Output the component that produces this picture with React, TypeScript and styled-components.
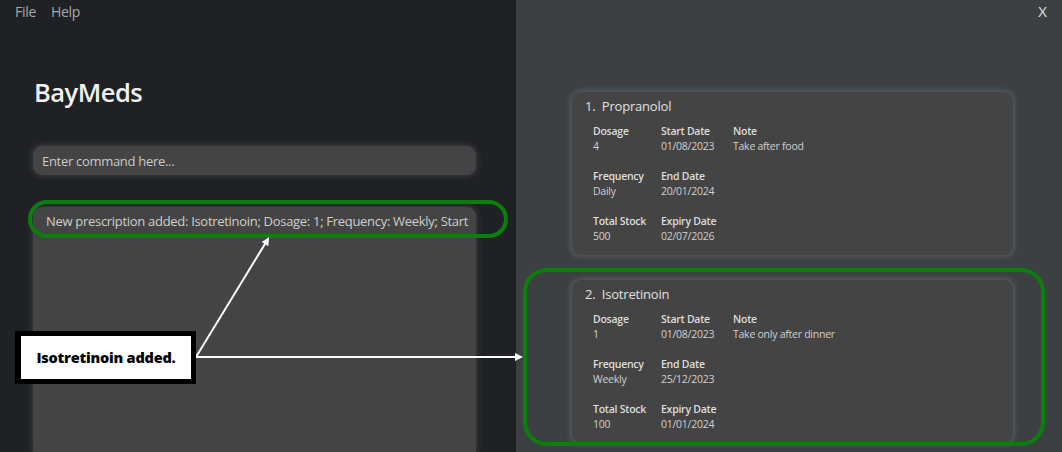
import React from "react";
import styled, { createGlobalStyle } from "styled-components";

const Global = createGlobalStyle`
  html, body { margin: 0; padding: 0; background: #202125; }
  body { font-family: "Open Sans", "Noto Sans", sans-serif; }
  * { box-sizing: border-box; }
`;

const Screen = styled.div`
  position: relative;
  display: flex;
  width: 1062px;
  height: 452px;
  overflow: hidden;
`;

const LeftPane = styled.div`
  width: 516px;
  flex: none;
  background: #202125;
  display: flex;
  flex-direction: column;
`;

const MenuBar = styled.div`
  height: 22px;
  display: flex;
  align-items: center;
  gap: 15px;
  padding-left: 15px;
  font-size: 14px;
  color: #a9a9a9;
  letter-spacing: -0.3px;
`;

const Main = styled.div`
  flex: 1;
  display: flex;
  flex-direction: column;
  padding: 0 40px 0 33px;
`;

const Title = styled.h1`
  margin: 54px 0 0 1px;
  font-size: 25.5px;
  font-weight: 600;
  color: #f2f2f2;
  line-height: 32px;
  letter-spacing: -0.5px;
`;

const CommandBox = styled.div`
  margin-top: 38px;
  height: 29px;
  border-radius: 9px;
  background: #444444;
  box-shadow: 0 0 6px 1px rgba(150, 165, 175, 0.22);
  display: flex;
  align-items: center;
  padding-left: 9px;
  font-size: 13px;
  color: #c9c9c9;
  letter-spacing: -0.3px;
`;

const ResultBox = styled.div`
  margin-top: 32px;
  flex: 1;
  background: #444444;
  border-radius: 9px 9px 0 0;
  box-shadow: 0 0 6px 1px rgba(150, 165, 175, 0.22);
  padding: 5px 0 0 13px;
  font-size: 13px;
  color: #cfcfcf;
  letter-spacing: -0.3px;
  white-space: nowrap;
  overflow: hidden;
`;

const RightPane = styled.div`
  flex: 1;
  background: #3d4043;
  position: relative;
  display: flex;
  flex-direction: column;
  padding: 92px 49px 0 56px;
  gap: 25px;
`;

const CloseX = styled.div`
  position: absolute;
  top: 1px;
  right: 15px;
  font-size: 15px;
  color: #e4e4e4;
`;

const Card = styled.div`
  height: 163px;
  background: #444444;
  border-radius: 9px;
  box-shadow: 0 0 5px 2px rgba(120, 140, 150, 0.35);
  padding: 4px 13px 0 13px;
  color: #dcdcdc;
`;

const CardTitle = styled.div`
  font-size: 13px;
  line-height: 20px;
  color: #e0e0e0;
  letter-spacing: -0.2px;
  white-space: pre;
`;

const FieldGrid = styled.div`
  margin: 8px 0 0 8px;
  display: grid;
  grid-template-columns: 68px 72px 1fr;
  row-gap: 15px;
`;

const Field = styled.div`
  display: flex;
  flex-direction: column;
  font-size: 10.5px;
  line-height: 15px;
  letter-spacing: -0.25px;
`;

const Label = styled.span`
  font-weight: 600;
  color: #dddddd;
`;

const Value = styled.span`
  color: #d0d0d0;
`;

const GreenRing = styled.div<{ $radius: number }>`
  position: absolute;
  border: 4.5px solid #0b7f0b;
  border-radius: ${(p) => p.$radius}px;
  pointer-events: none;
`;

const Callout = styled.div`
  position: absolute;
  left: 15px;
  top: 331px;
  width: 181px;
  height: 53px;
  background: #ffffff;
  border: 5px solid #000000;
  border-left-width: 6px;
  display: flex;
  align-items: center;
  justify-content: center;
  font-size: 14.5px;
  font-weight: 800;
  color: #000;
  letter-spacing: -0.2px;
`;

const Overlay = styled.svg`
  position: absolute;
  left: 0;
  top: 0;
  pointer-events: none;
`;

type Rx = {
  num: number;
  name: string;
  dosage: string;
  start: string;
  note: string;
  freq: string;
  end: string;
  stock: string;
  expiry: string;
};

const data: Rx[] = [
  {
    num: 1,
    name: "Propranolol",
    dosage: "4",
    start: "01/08/2023",
    note: "Take after food",
    freq: "Daily",
    end: "20/01/2024",
    stock: "500",
    expiry: "02/07/2026",
  },
  {
    num: 2,
    name: "Isotretinoin",
    dosage: "1",
    start: "01/08/2023",
    note: "Take only after dinner",
    freq: "Weekly",
    end: "25/12/2023",
    stock: "100",
    expiry: "01/01/2024",
  },
];

const F = ({ label, value }: { label: string; value: string }) => (
  <Field>
    <Label>{label}</Label>
    <Value>{value}</Value>
  </Field>
);

const RxCard = ({ rx }: { rx: Rx }) => (
  <Card>
    <CardTitle>{`${rx.num}.  ${rx.name}`}</CardTitle>
    <FieldGrid>
      <F label="Dosage" value={rx.dosage} />
      <F label="Start Date" value={rx.start} />
      <F label="Note" value={rx.note} />
      <F label="Frequency" value={rx.freq} />
      <F label="End Date" value={rx.end} />
      <div />
      <F label="Total Stock" value={rx.stock} />
      <F label="Expiry Date" value={rx.expiry} />
      <div />
    </FieldGrid>
  </Card>
);

export default function App() {
  return (
    <>
      <Global />
      <Screen>
        <LeftPane>
          <MenuBar>
            <span>File</span>
            <span>Help</span>
          </MenuBar>
          <Main>
            <Title>BayMeds</Title>
            <CommandBox>Enter command here...</CommandBox>
            <ResultBox>
              New prescription added: Isotretinoin; Dosage: 1; Frequency: Weekly; Start
            </ResultBox>
          </Main>
        </LeftPane>
        <RightPane>
          <CloseX>X</CloseX>
          {data.map((rx) => (
            <RxCard key={rx.num} rx={rx} />
          ))}
        </RightPane>

        <GreenRing $radius={20} style={{ left: 28, top: 200, width: 480, height: 38 }} />
        <GreenRing $radius={24} style={{ left: 523, top: 268, width: 522, height: 178 }} />
        <Overlay width={1062} height={452}>
          <defs>
            <marker id="ah" markerWidth="8" markerHeight="8" refX="6" refY="4" orient="auto" markerUnits="userSpaceOnUse">
              <path d="M0,0 L8,4 L0,8 Z" fill="#ffffff" />
            </marker>
          </defs>
          <line x1={196} y1={357} x2={268} y2={239} stroke="#ffffff" strokeWidth={2} markerEnd="url(#ah)" />
          <line x1={196} y1={357} x2={521} y2={357} stroke="#ffffff" strokeWidth={2} markerEnd="url(#ah)" />
        </Overlay>
        <Callout>Isotretinoin added.</Callout>
      </Screen>
    </>
  );
}
